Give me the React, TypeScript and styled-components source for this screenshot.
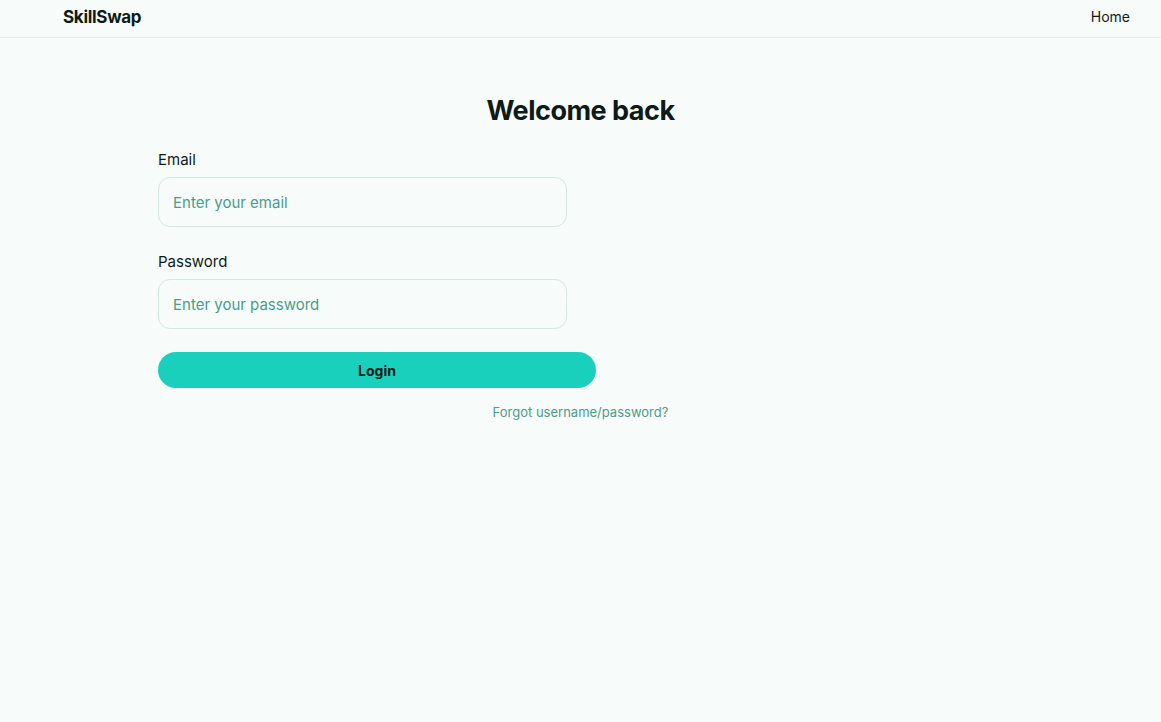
import React from "react";
import styled, { createGlobalStyle } from "styled-components";

const Global = createGlobalStyle`
  html, body { margin: 0; padding: 0; background: #f7fbfa; }
  body { font-family: "Inter", "Noto Sans", sans-serif; color: #0e1a17; }
  * { box-sizing: border-box; }
`;

const Page = styled.div`
  min-height: 722px;
  background: #f7fbfa;
  display: flex;
  flex-direction: column;
`;

const Header = styled.header`
  height: 38px;
  display: flex;
  align-items: center;
  justify-content: space-between;
  padding: 0 31px 4px 63px;
  border-bottom: 1px solid #e5ecea;
`;

const Logo = styled.div`
  font-size: 17px;
  font-weight: 700;
  letter-spacing: -0.3px;
  color: #0e1a17;
`;

const NavLink = styled.a`
  font-size: 14px;
  color: #0e1a17;
  text-decoration: none;
`;

const Main = styled.main`
  display: flex;
  flex-direction: column;
  padding: 56px 158px 0;
`;

const Title = styled.h1`
  margin: 0;
  text-align: center;
  font-size: 27px;
  font-weight: 700;
  letter-spacing: -0.5px;
  line-height: 34px;
  color: #0e1a17;
`;

const Form = styled.form`
  display: flex;
  flex-direction: column;
  margin-top: 21px;
`;

const Field = styled.label`
  display: flex;
  flex-direction: column;
  width: 409px;
  margin-bottom: 24px;
`;

const LabelText = styled.span`
  font-size: 15px;
  line-height: 22px;
  color: #0e1a17;
  margin-bottom: 6px;
`;

const Input = styled.input`
  height: 50px;
  border: 1px solid #d2e9e3;
  border-radius: 12px;
  background: #f7fbfa;
  padding: 0 14px;
  font-family: inherit;
  font-size: 15px;
  color: #0e1a17;
  outline: none;
  &::placeholder { color: #4d9c8b; }
`;

const Button = styled.button`
  width: 438px;
  height: 36px;
  margin-top: -1px;
  border: none;
  border-radius: 18px;
  background: #19d0bc;
  font-family: inherit;
  font-size: 14px;
  font-weight: 700;
  color: #0e1a17;
`;

const Forgot = styled.a`
  align-self: center;
  margin-top: 16px;
  font-size: 13px;
  color: #4d9c8b;
  text-decoration: none;
`;

export default function App() {
  return (
    <Page>
      <Global />
      <Header>
        <Logo>SkillSwap</Logo>
        <NavLink href="#">Home</NavLink>
      </Header>
      <Main>
        <Title>Welcome back</Title>
        <Form onSubmit={(e) => e.preventDefault()}>
          <Field>
            <LabelText>Email</LabelText>
            <Input type="email" placeholder="Enter your email" />
          </Field>
          <Field>
            <LabelText>Password</LabelText>
            <Input type="password" placeholder="Enter your password" />
          </Field>
          <Button type="submit">Login</Button>
          <Forgot href="#">Forgot username/password?</Forgot>
        </Form>
      </Main>
    </Page>
  );
}
